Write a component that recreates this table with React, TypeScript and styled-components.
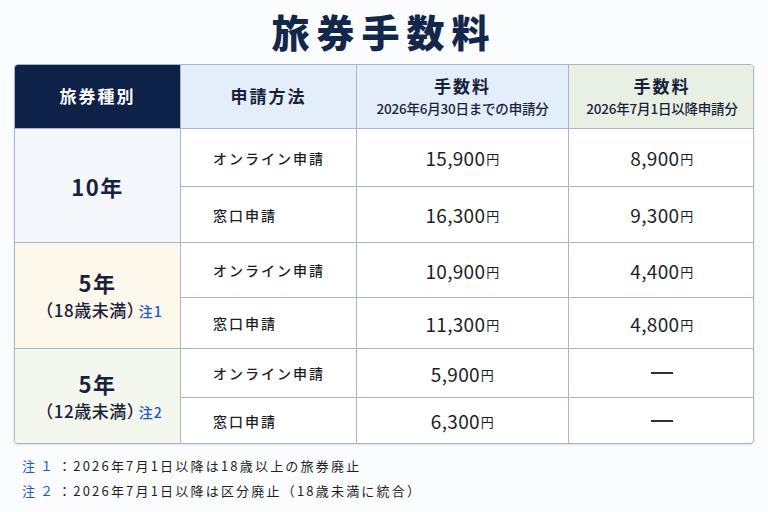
import React from 'react';
import styled, { createGlobalStyle } from 'styled-components';

const GlobalStyle = createGlobalStyle`
  html, body {
    margin: 0;
    padding: 0;
    background: #fbfcfd;
  }
  body {
    font-family: 'Noto Sans CJK JP', 'Noto Sans', sans-serif;
    color: #1b1f27;
  }
`;

const Page = styled.div`
  width: 768px;
  height: 512px;
  padding: 6px 14px 0;
  box-sizing: border-box;
`;

const Title = styled.h1`
  margin: 0;
  height: 58px;
  text-align: center;
  font-size: 38px;
  line-height: 50px;
  font-weight: 800;
  letter-spacing: 7px;
  color: #13274a;
`;

const Table = styled.div`
  display: grid;
  grid-template-columns: 165px 176px 212px 187px;
  grid-template-rows: 63px 58px 56px 55px 51px 49px 46px;
  border: 1px solid #a9b4c4;
  border-radius: 4px;
  overflow: hidden;
  background: #ffffff;
  box-shadow: 0 1px 2px rgba(60, 70, 90, 0.15);
`;

const HeadCell = styled.div<{ $bg: string; $dark?: boolean }>`
  display: flex;
  flex-direction: column;
  align-items: center;
  justify-content: center;
  background: ${(p) => p.$bg};
  color: ${(p) => (p.$dark ? '#ffffff' : '#17223a')};
  border-left: ${(p) => (p.$dark ? 'none' : '1px solid #a9b4c4')};
  font-size: 17px;
  font-weight: 700;
  letter-spacing: 2px;
  line-height: 1.3;
`;

const HeadSub = styled.span`
  font-size: 13.5px;
  font-weight: 500;
  letter-spacing: -0.2px;
  margin-top: 3px;
`;

const KindCell = styled.div<{ $bg: string; $rows: number }>`
  grid-row: span ${(p) => p.$rows};
  display: flex;
  flex-direction: column;
  align-items: center;
  justify-content: center;
  background: ${(p) => p.$bg};
  border-top: 1px solid #a9b4c4;
  color: #17223a;
`;

const KindMain = styled.div`
  font-size: 22px;
  font-weight: 700;
  letter-spacing: 1.5px;
  line-height: 30px;
`;

const KindSub = styled.div`
  font-size: 17px;
  font-weight: 500;
  letter-spacing: 0.5px;
  line-height: 26px;
  margin-left: 4px;
`;

const CloseParen = styled.span`
  letter-spacing: -6px;
`;

const NoteMark = styled.span`
  color: #1a55d4;
  font-size: 14px;
  margin-left: 1px;
  letter-spacing: 1px;
`;

const MethodCell = styled.div`
  display: flex;
  align-items: center;
  padding-left: 32px;
  border-left: 1px solid #a9b4c4;
  border-top: 1px solid #a9b4c4;
  font-size: 14px;
  font-weight: 500;
  letter-spacing: 2px;
`;

const PriceCell = styled.div`
  display: flex;
  align-items: center;
  justify-content: center;
  border-left: 1px solid #a9b4c4;
  border-top: 1px solid #a9b4c4;
  font-size: 19px;
  font-weight: 400;
  letter-spacing: 0.3px;
`;

const Yen = styled.span`
  font-size: 13px;
  margin-left: 1px;
  position: relative;
  top: 1px;
`;

const Dash = styled.span`
  display: block;
  width: 22px;
  height: 2px;
  background: #2a2f38;
`;

const Notes = styled.div`
  margin-top: 12px;
  padding-left: 8px;
  display: flex;
  flex-direction: column;
  gap: 6px;
`;

const NoteLine = styled.div`
  font-size: 13px;
  letter-spacing: 2.2px;
  line-height: 19px;
  color: #1b1f27;
`;

const NoteLabel = styled.span`
  color: #1a55d4;
  letter-spacing: 5px;
`;

type Row = { method: string; before: string | null; after: string | null };
type Group = { main: string; sub?: string; note?: string; bg: string; rows: Row[] };

const groups: Group[] = [
  {
    main: '10年',
    bg: '#f3f6fb',
    rows: [
      { method: 'オンライン申請', before: '15,900', after: '8,900' },
      { method: '窓口申請', before: '16,300', after: '9,300' },
    ],
  },
  {
    main: '5年',
    sub: '18歳未満',
    note: '注1',
    bg: '#fdf8ec',
    rows: [
      { method: 'オンライン申請', before: '10,900', after: '4,400' },
      { method: '窓口申請', before: '11,300', after: '4,800' },
    ],
  },
  {
    main: '5年',
    sub: '12歳未満',
    note: '注2',
    bg: '#f4f7ee',
    rows: [
      { method: 'オンライン申請', before: '5,900', after: null },
      { method: '窓口申請', before: '6,300', after: null },
    ],
  },
];

const Price = ({ value }: { value: string | null }) => (
  <PriceCell>
    {value ? (
      <>
        {value}
        <Yen>円</Yen>
      </>
    ) : (
      <Dash />
    )}
  </PriceCell>
);

export default function App() {
  return (
    <Page>
      <GlobalStyle />
      <Title>旅券手数料</Title>
      <Table>
        <HeadCell $bg="#0e2146" $dark>
          旅券種別
        </HeadCell>
        <HeadCell $bg="#e3eefa">申請方法</HeadCell>
        <HeadCell $bg="#e3eefa">
          手数料
          <HeadSub>2026年6月30日までの申請分</HeadSub>
        </HeadCell>
        <HeadCell $bg="#e7f0e2">
          手数料
          <HeadSub>2026年7月1日以降申請分</HeadSub>
        </HeadCell>

        {groups.map((g, gi) =>
          g.rows.map((r, ri) => (
            <React.Fragment key={`${gi}-${ri}`}>
              {ri === 0 && (
                <KindCell $bg={g.bg} $rows={g.rows.length}>
                  <KindMain>{g.main}</KindMain>
                  {g.sub && (
                    <KindSub>
                      （{g.sub}
                      <CloseParen>）</CloseParen>
                      <NoteMark>{g.note}</NoteMark>
                    </KindSub>
                  )}
                </KindCell>
              )}
              <MethodCell>{r.method}</MethodCell>
              <Price value={r.before} />
              <Price value={r.after} />
            </React.Fragment>
          ))
        )}
      </Table>
      <Notes>
        <NoteLine>
          <NoteLabel>注１</NoteLabel>：2026年7月1日以降は18歳以上の旅券廃止
        </NoteLine>
        <NoteLine>
          <NoteLabel>注２</NoteLabel>：2026年7月1日以降は区分廃止（18歳未満に統合）
        </NoteLine>
      </Notes>
    </Page>
  );
}
